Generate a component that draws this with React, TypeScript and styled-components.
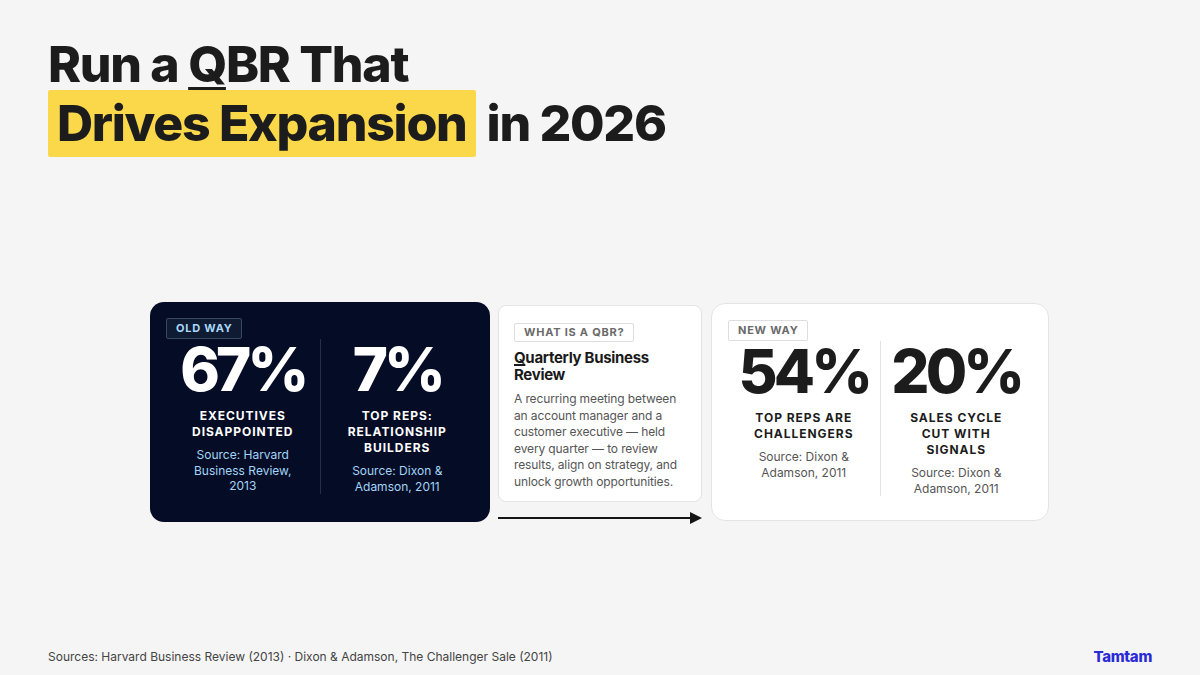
import styled, { createGlobalStyle } from "styled-components";

const GlobalStyle = createGlobalStyle`
  html, body {
    margin: 0;
    padding: 0;
    background: #f5f5f5;
  }
  body {
    font-family: Inter, "Noto Sans", "Liberation Sans", sans-serif;
    color: #1c1c1c;
  }
  * {
    box-sizing: border-box;
  }
`;

type Tone = "dark" | "light";

const stats = {
  old: [
    {
      value: "67%",
      label: "Executives disappointed",
      source: "Source: Harvard Business Review, 2013",
    },
    {
      value: "7%",
      label: "Top reps: relationship builders",
      source: "Source: Dixon & Adamson, 2011",
    },
  ],
  next: [
    {
      value: "54%",
      label: "Top reps are challengers",
      source: "Source: Dixon & Adamson, 2011",
    },
    {
      value: "20%",
      label: "Sales cycle cut with signals",
      source: "Source: Dixon & Adamson, 2011",
    },
  ],
};

function StatPanel(props: { tone: Tone; tag: string; items: typeof stats.old }) {
  const { tone, tag, items } = props;
  return (
    <Panel $tone={tone}>
      <Tag $tone={tone}>{tag}</Tag>
      <StatGrid>
        <Stat item={items[0]} tone={tone} />
        <Divider $tone={tone} />
        <Stat item={items[1]} tone={tone} />
      </StatGrid>
    </Panel>
  );
}

function Stat(props: { item: { value: string; label: string; source: string }; tone: Tone }) {
  const { item, tone } = props;
  return (
    <StatColumn>
      <StatValue $tone={tone}>{item.value}</StatValue>
      <StatLabel $tone={tone}>{item.label}</StatLabel>
      <StatSource $tone={tone}>{item.source}</StatSource>
    </StatColumn>
  );
}

function Arrow() {
  return (
    <svg width="204" height="14" viewBox="0 0 204 14">
      <line x1="0" y1="7" x2="194" y2="7" stroke="#151515" strokeWidth="2" />
      <polygon points="192,1 204,7 192,13" fill="#151515" />
    </svg>
  );
}

export default function App() {
  return (
    <Page>
      <GlobalStyle />
      <Title>
        <TitleLine>
          Run a <QTail>Q</QTail>BR That
        </TitleLine>
        <TitleRow>
          <Highlight>Drives Expansion</Highlight>
          <span>in 2026</span>
        </TitleRow>
      </Title>

      <Main>
        <StatPanel tone="dark" tag="Old way" items={stats.old} />
        <Middle>
          <InfoCard>
            <Tag $tone="light" $compact>
              What is a QBR?
            </Tag>
            <InfoTitle>
              <QTail $small>Q</QTail>uarterly Business Review
            </InfoTitle>
            <InfoBody>
              A recurring meeting between an account manager and a customer
              executive — held every quarter — to review results, align on
              strategy, and unlock growth opportunities.
            </InfoBody>
          </InfoCard>
          <ArrowRow>
            <Arrow />
          </ArrowRow>
        </Middle>
        <StatPanel tone="light" tag="New way" items={stats.next} />
      </Main>

      <Footer>
        <FooterNote>
          Sources: Harvard Business Review (2013) · Dixon &amp; Adamson, The
          Challenger Sale (2011)
        </FooterNote>
        <Brand>Tamtam</Brand>
      </Footer>
    </Page>
  );
}

const Page = styled.div({
  width: 1200,
  height: 675,
  display: "flex",
  flexDirection: "column",
  padding: "37px 48px 0",
  overflow: "hidden",
});

const Title = styled.h1({
  margin: 0,
  fontSize: 50,
  fontWeight: 800,
  lineHeight: 1.1,
  letterSpacing: "-0.026em",
  color: "#1c1c1c",
});

const TitleLine = styled.div({
  whiteSpace: "pre",
});

const TitleRow = styled.div({
  display: "flex",
  alignItems: "center",
  gap: 11,
  marginTop: -2,
});

const QTail = styled.span<{ $small?: boolean }>((p) => ({
  textDecoration: "underline",
  textDecorationThickness: p.$small ? 2 : 4,
  textUnderlineOffset: p.$small ? 1 : 5,
}));

const Highlight = styled.span({
  display: "inline-block",
  background: "#fbd84a",
  borderRadius: 2,
  padding: "6px 9px",
});

const Main = styled.div({
  flex: 1,
  display: "flex",
  alignItems: "flex-start",
  justifyContent: "center",
  gap: 8,
  paddingTop: 145,
  marginRight: 1,
});

const Panel = styled.div<{ $tone: Tone }>((p) => ({
  width: p.$tone === "dark" ? 340 : 338,
  height: p.$tone === "dark" ? 220 : 218,
  marginTop: p.$tone === "dark" ? 0 : 1,
  marginLeft: p.$tone === "dark" ? 0 : 1,
  padding: "14px 16px",
  borderRadius: 14,
  background: p.$tone === "dark" ? "#050c25" : "#ffffff",
  border: p.$tone === "dark" ? "none" : "1px solid #e4e4e4",
}));

const Tag = styled.div<{ $tone: Tone; $compact?: boolean }>((p) => ({
  display: "inline-block",
  fontSize: 11,
  fontWeight: 700,
  lineHeight: "13px",
  letterSpacing: "0.07em",
  textTransform: "uppercase",
  padding: p.$compact ? "2px 8px 2px 9px" : "3px 8px 3px 9px",
  borderRadius: 2,
  color: p.$tone === "dark" ? "#a9d9f8" : "#6a6a6a",
  background: p.$tone === "dark" ? "#0f1a33" : "#ffffff",
  border: p.$tone === "dark" ? "1px solid #3a4762" : "1px solid #dedede",
}));

const StatGrid = styled.div({
  display: "grid",
  gridTemplateColumns: "minmax(0, 1fr) 1px minmax(0, 1fr)",
});

const Divider = styled.div<{ $tone: Tone }>((p) => ({
  background: p.$tone === "dark" ? "#262f49" : "#e2e2e2",
}));

const StatColumn = styled.div({
  display: "flex",
  flexDirection: "column",
  alignItems: "center",
  textAlign: "center",
  padding: "0 24px",
});

const StatValue = styled.div<{ $tone: Tone }>((p) => ({
  fontSize: 60,
  fontWeight: 800,
  lineHeight: 1,
  letterSpacing: "-0.065em",
  whiteSpace: "nowrap",
  color: p.$tone === "dark" ? "#ffffff" : "#1c1c1c",
}));

const StatLabel = styled.div<{ $tone: Tone }>((p) => ({
  marginTop: 9,
  fontSize: 12,
  fontWeight: 700,
  lineHeight: "16px",
  letterSpacing: "0.08em",
  textTransform: "uppercase",
  color: p.$tone === "dark" ? "#ffffff" : "#1c1c1c",
}));

const StatSource = styled.div<{ $tone: Tone }>((p) => ({
  marginTop: 7,
  fontSize: 12,
  lineHeight: "15.5px",
  color: p.$tone === "dark" ? "#a3d4f6" : "#555555",
}));

const Middle = styled.div({
  width: 204,
  display: "flex",
  flexDirection: "column",
  marginTop: 3,
});

const InfoCard = styled.div({
  height: 197,
  padding: "14px 15px",
  background: "#ffffff",
  border: "1px solid #e4e4e4",
  borderRadius: 8,
});

const InfoTitle = styled.div({
  marginTop: 7,
  fontSize: 15,
  fontWeight: 700,
  lineHeight: "17px",
  letterSpacing: "-0.02em",
  color: "#1a1a1a",
});

const InfoBody = styled.p({
  margin: "8px 0 0",
  fontSize: 12,
  lineHeight: "16.6px",
  letterSpacing: "-0.01em",
  color: "#555555",
});

const ArrowRow = styled.div({
  marginTop: 9,
  display: "flex",
});

const Footer = styled.div({
  display: "flex",
  justifyContent: "space-between",
  alignItems: "center",
  paddingBottom: 9,
});

const FooterNote = styled.div({
  fontSize: 12,
  lineHeight: "16px",
  color: "#444444",
});

const Brand = styled.div({
  fontSize: 15,
  fontWeight: 800,
  letterSpacing: "-0.02em",
  color: "#2a2ad6",
});
